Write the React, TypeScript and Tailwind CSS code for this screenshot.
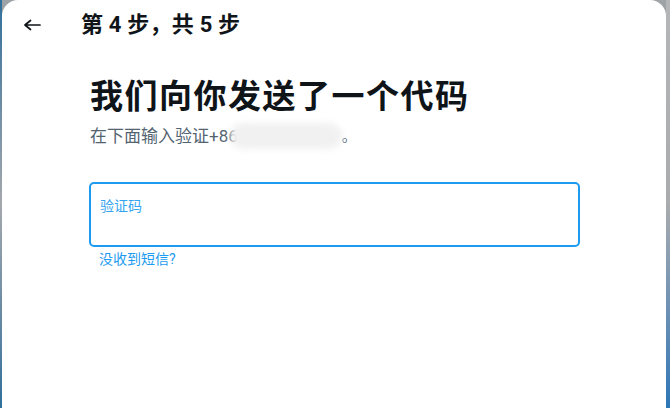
export default function App() {
  return (
    <div
      className="flex h-screen w-full overflow-hidden bg-[#9ea3a8]"
      style={{ fontFamily: 'Roboto, "Noto Sans CJK SC", sans-serif' }}
    >
      <div className="w-[2px] shrink-0 bg-gradient-to-b from-[#2f6f9a] via-[#a4a8ac] to-[#2f6f9a]" />
      <div className="flex flex-1 flex-col rounded-t-2xl bg-white">
        <div className="flex h-[50px] items-center pl-[21px]">
          <svg width="18" height="14" viewBox="0 0 18 14" className="text-[#0f1419]">
            <path
              d="M17 7H2M7.5 2.5 2 7l5.5 4.5"
              fill="none"
              stroke="currentColor"
              strokeWidth="1.7"
              strokeLinecap="round"
              strokeLinejoin="round"
            />
          </svg>
          <span className="ml-[40px] text-[22px] font-bold leading-7 tracking-[0.2px] text-[#0f1419]">
            第 4 步，共 5 步
          </span>
        </div>

        <div className="mt-[27px] pl-[88px]">
          <h1 className="text-[33px] font-bold leading-[40px] tracking-[1.5px] text-[#0f1419]">
            我们向你发送了一个代码
          </h1>
          <p className="mt-[8px] flex h-[22px] items-center text-[17px] leading-[22px] text-[#536471]">
            <span>在下面输入验证+86</span>
            <span className="relative -ml-[8px] inline-block h-[26px] w-[112px] rounded-full bg-[#f1f1f1] blur-[3px]" />
            <span className="text-[15px]">。</span>
          </p>

          <div className="-ml-px mt-[35px] h-[65px] w-[491px] rounded-[5px] border-2 border-[#1d9bf0] pl-[9px] pt-[10px]">
            <span className="text-[14px] leading-[18px] text-[#36a5f0]">验证码</span>
          </div>
          <a className="mt-[3px] block pl-[9px] text-[14px] leading-[18px] text-[#1d9bf0]">没收到短信?</a>
        </div>
      </div>
      <div className="w-[4px] shrink-0 bg-gradient-to-b from-[#b4b6b8] via-[#a9abad] to-[#2a76b6]" />
    </div>
  )
}
